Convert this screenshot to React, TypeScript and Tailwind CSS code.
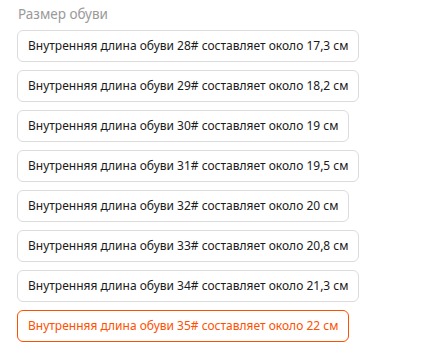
const sizes = [
  { n: 28, cm: "17,3" },
  { n: 29, cm: "18,2" },
  { n: 30, cm: "19" },
  { n: 31, cm: "19,5" },
  { n: 32, cm: "20" },
  { n: 33, cm: "20,8" },
  { n: 34, cm: "21,3" },
  { n: 35, cm: "22" },
];

export default function App() {
  const selected = 35;
  return (
    <div className="min-h-screen bg-white pl-[17px] pt-[4px] font-['Noto_Sans',sans-serif]">
      <div className="text-[13.5px] leading-[20px] text-[#9a9a9a] pl-px">Размер обуви</div>
      <div className="mt-[6px] flex flex-col items-start gap-2">
        {sizes.map((s) => (
          <button
            key={s.n}
            className={
              "h-8 rounded-md border px-[10px] text-[12px] whitespace-nowrap " +
              (s.n === selected
                ? "border-[#ff5000] text-[#ff5000]"
                : "border-[#dcdcdc] text-[#1a1a1a]")
            }
          >
            Внутренняя длина обуви {s.n}# составляет около {s.cm} см
          </button>
        ))}
      </div>
    </div>
  );
}
